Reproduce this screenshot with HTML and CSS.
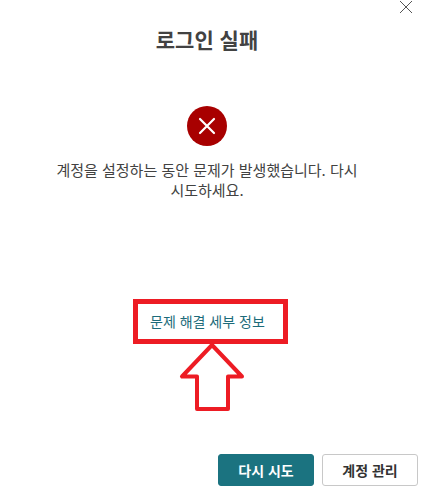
FILE: index.html
```html
<!DOCTYPE html>
<html lang="ko">
<head>
<meta charset="utf-8">
<title>로그인 실패</title>
<link rel="stylesheet" href="styles.css">
</head>
<body>
<div class="dialog">
  <button class="close" aria-label="닫기">
    <svg width="14" height="14" viewBox="0 0 14 14"><path d="M1 1l12 12M13 1L1 13" stroke="#555" stroke-width="1" fill="none"/></svg>
  </button>
  <h1 class="title">로그인 실패</h1>
  <div class="error-icon">
    <svg width="40" height="40" viewBox="0 0 40 40"><circle cx="20" cy="20" r="20" fill="#a80000"/><path d="M13 13l14 14M27 13L13 27" stroke="#fff" stroke-width="2.2" stroke-linecap="round" fill="none"/></svg>
  </div>
  <p class="message">계정을 설정하는 동안 문제가 발생했습니다. 다시 시도하세요.</p>
  <a class="details" href="#">문제 해결 세부 정보</a>
  <div class="actions">
    <button class="btn primary">다시 시도</button>
    <button class="btn secondary">계정 관리</button>
  </div>
  <div class="highlight"></div>
  <svg class="arrow" width="68" height="72" viewBox="0 0 68 72"><path d="M34 4L4 35.500H19V68H50V35.500H64Z" fill="#fff" stroke="#ed1c24" stroke-width="4" stroke-linejoin="round"/></svg>
</div>
</body>
</html>
```
FILE: styles.css
```css
* { box-sizing: border-box; }
html, body { margin: 0; padding: 0; background: #fff; }
body { font-family: "Noto Sans CJK KR", "Noto Sans", sans-serif; }
.dialog { position: relative; width: 428px; height: 497px; padding: 24px 10px 11px 0; display: flex; flex-direction: column; align-items: stretch; overflow: hidden; }
.close { position: absolute; top: 0; right: 15px; width: 14px; height: 14px; padding: 0; border: 0; background: none; display: flex; }
.title { margin: 0; width: 414px; height: 30px; font-size: 21px; line-height: 30px; font-weight: 700; color: #424242; text-align: center; }
.error-icon { display: flex; width: 414px; justify-content: center; margin-top: 52px; height: 40px; }
.message { width: 320px; margin: 14px 0 0 47px; font-size: 15px; line-height: 20px; color: #424242; text-align: center; word-break: keep-all; }
.details { align-self: flex-start; margin: 111px 0 0 150px; font-size: 14px; line-height: 20px; color: #1c6b7a; text-decoration: none; }
.actions { margin-top: auto; display: flex; justify-content: flex-end; gap: 8px; }
.btn { height: 32px; border-radius: 3px; font-family: inherit; font-size: 14px; font-weight: 700; padding: 0; }
.primary { width: 96px; background: #1b7380; border: 1px solid #1b7380; color: #fff; }
.secondary { width: 96px; background: #fff; border: 1px solid #c8c8c8; color: #333; }
.highlight { position: absolute; left: 133px; top: 299px; width: 155px; height: 45px; border: 5px solid #ed1c24; }
.arrow { position: absolute; left: 178px; top: 341px; }
```
